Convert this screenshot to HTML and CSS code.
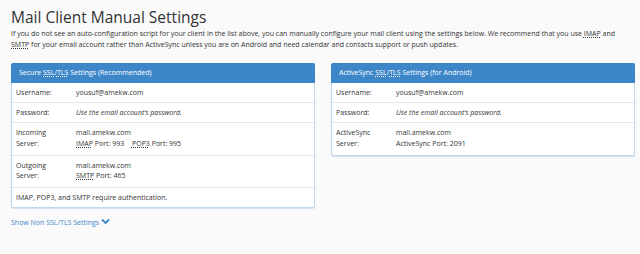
FILE: index.html
```html
<!DOCTYPE html>
<html lang="en">

<head>
    <title>Mail Client Manual Settings</title>
    <link rel="stylesheet" href="styles.css">
</head>

<body>
    <div class="page">
        <h1>Mail Client Manual Settings</h1>
        <p class="intro">If you do not see an auto-configuration script for your client in the list above, you can manually configure your mail client using the settings below. We recommend that you use <abbr>IMAP</abbr> and <abbr>SMTP</abbr> for your email account rather than ActiveSync unless you are on Android and need calendar and contacts support or push updates.</p>

        <div class="columns">
            <div class="col">
                <div class="panel">
                    <div class="panel-head">Secure <abbr>SSL</abbr>/<abbr>TLS</abbr> Settings (Recommended)</div>
                    <table>
                        <tr>
                            <td class="lbl">Username:</td>
                            <td>yousuf@amekw.com</td>
                        </tr>
                        <tr>
                            <td class="lbl">Password:</td>
                            <td><em>Use the email account’s password.</em></td>
                        </tr>
                        <tr class="two">
                            <td class="lbl">Incoming Server:</td>
                            <td>mail.amekw.com<br><abbr>IMAP</abbr> Port: 993 <span class="gap"></span><abbr>POP3</abbr> Port: 995</td>
                        </tr>
                        <tr class="two">
                            <td class="lbl">Outgoing Server:</td>
                            <td>mail.amekw.com<br><abbr>SMTP</abbr> Port: 465</td>
                        </tr>
                        <tr>
                            <td colspan="2">IMAP, POP3, and SMTP require authentication.</td>
                        </tr>
                    </table>
                </div>
                <a class="more" href="#">Show Non SSL/TLS Settings <svg width="9" height="7" viewBox="0 0 9 7"><path d="M1 1.5 L4.5 5 L8 1.5" fill="none" stroke="#3d87c9" stroke-width="1.8"/></svg></a>
            </div>

            <div class="col">
                <div class="panel">
                    <div class="panel-head">ActiveSync <abbr>SSL</abbr>/<abbr>TLS</abbr> Settings (for Android)</div>
                    <table>
                        <tr>
                            <td class="lbl">Username:</td>
                            <td>yousuf@amekw.com</td>
                        </tr>
                        <tr>
                            <td class="lbl">Password:</td>
                            <td><em>Use the email account’s password.</em></td>
                        </tr>
                        <tr class="two">
                            <td class="lbl">ActiveSync Server:</td>
                            <td>mail.amekw.com<br>ActiveSync Port: 2091</td>
                        </tr>
                    </table>
                </div>
            </div>
        </div>
    </div>
</body>

</html>
```

FILE: styles.css
```css
body {
    margin: 0;
    background-color: #fafafa;
    font-family: "Open Sans", "DejaVu Sans", sans-serif;
    color: #333;
}

.page {
    padding: 0 5px 0 11px;
}

h1 {
    margin: 0;
    padding-top: 7px;
    font-size: 15.5px;
    font-weight: 400;
    line-height: 20px;
    color: #333;
}

p.intro {
    margin: 2px 0 0 0;
    font-size: 7px;
    line-height: 10.5px;
    color: #333;
}

abbr {
    text-decoration: underline dotted;
    text-underline-offset: 1px;
}

.columns {
    display: flex;
    gap: 16px;
    margin-top: 13px;
}

.col {
    flex: 1;
}

.panel {
    background-color: #fff;
    border: 1px solid #c3d6ec;
    border-radius: 2px;
    box-shadow: 0 1px 1px #d5e2f1;
}

.panel-head {
    background-color: #3d87c9;
    color: #fff;
    font-size: 7px;
    line-height: 20px;
    padding: 0 8px;
    margin: -1px -1px 0 -1px;
    border-radius: 2px 2px 0 0;
}

table {
    width: 100%;
    border-collapse: collapse;
    font-size: 7px;
}

td {
    padding: 4px 4px;
    line-height: 11px;
    vertical-align: top;
    border-top: 1px solid #e6e6e6;
}

tr:first-child td {
    border-top: none;
}

tr.two td {
    padding: 5px 4px 5.5px 4px;
    line-height: 10.5px;
}

td.lbl {
    width: 51px;
    padding-right: 5px;
}

em {
    font-style: italic;
}

.gap {
    display: inline-block;
    width: 6px;
}

a.more {
    display: inline-block;
    margin-top: 10px;
    font-size: 7px;
    color: #3d87c9;
    text-decoration: none;
}

a.more svg {
    vertical-align: 0;
}
```
